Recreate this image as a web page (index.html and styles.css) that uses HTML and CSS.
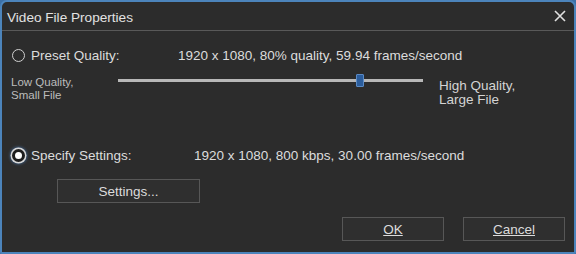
FILE: index.html
```html
<!doctype html>
<html lang="en">
  <head>
    <meta charset="UTF-8" />
    <title>Video File Properties</title>
    <link rel="stylesheet" href="styles.css">
  </head>
  <body>
    <div class="window">
      <div class="title-bar">
        <span class="title">Video File Properties</span>
        <svg class="close" width="12" height="12" viewBox="0 0 12 12">
          <path d="M1 1 L11 11 M11 1 L1 11" stroke="#e0e0e0" stroke-width="1.6" fill="none" />
        </svg>
      </div>

      <div class="content">
        <div class="option-row preset-row">
          <span class="radio"></span>
          <span class="option-label preset-label">Preset Quality:</span>
          <span class="option-value">1920 x 1080, 80% quality, 59.94 frames/second</span>
        </div>

        <div class="slider-row">
          <div class="slider-min">Low Quality,<br />Small File</div>
          <div class="slider-track">
            <span class="slider-thumb"></span>
          </div>
          <div class="slider-max">High Quality,<br />Large File</div>
        </div>

        <div class="option-row specify-row">
          <span class="radio checked"></span>
          <span class="option-label specify-label">Specify Settings:</span>
          <span class="option-value">1920 x 1080, 800 kbps, 30.00 frames/second</span>
        </div>

        <button class="btn settings-btn">Settings...</button>
      </div>

      <div class="footer">
        <button class="btn footer-btn"><u>OK</u></button>
        <button class="btn footer-btn"><u>Cancel</u></button>
      </div>
    </div>
  </body>
</html>
```

FILE: styles.css
```css
body {
  margin: 0;
  background: #3d70a6;
  font-family: "Liberation Sans", Arial, sans-serif;
  color: #dcdcdc;
}
.window {
  width: 576px;
  height: 254px;
  box-sizing: border-box;
  border: 2px solid #4c84bb;
  border-radius: 7px 7px 2px 2px;
  background: #2c2c2c;
  display: flex;
  flex-direction: column;
}
.title-bar {
  height: 28px;
  display: flex;
  align-items: center;
  justify-content: space-between;
  padding: 0 8px 0 5px;
  border-bottom: 1px solid #595959;
}
.title {
  font-size: 13.6px;
  color: #e2e2e2;
  padding-top: 2px;
}
.close {
  display: block;
}
.content {
  flex: 1;
  padding: 0 10px;
}
.option-row {
  display: flex;
  align-items: center;
  height: 18px;
  font-size: 13.5px;
}
.preset-row {
  margin-top: 15px;
}
.specify-row {
  margin-top: 39px;
}
.radio {
  width: 13px;
  height: 13px;
  box-sizing: border-box;
  border: 1.5px solid #d0d0d0;
  border-radius: 50%;
  margin-right: 6px;
  flex-shrink: 0;
}
.radio.checked {
  background: #ffffff;
  border: 3px solid #1d1d1d;
  box-shadow: 0 0 0 1.5px #d8d8d8, 0 0 3px 2px rgba(80, 130, 190, 0.7);
}
.preset-label {
  width: 147px;
}
.specify-label {
  width: 163px;
}
.option-value {
  white-space: nowrap;
}
.slider-row {
  display: flex;
  align-items: flex-start;
  margin-top: 12px;
}
.slider-min {
  width: 107px;
  font-size: 11.5px;
  line-height: 13px;
  color: #bcbcbc;
  margin-left: -1px;
}
.slider-track {
  position: relative;
  width: 305px;
  height: 3px;
  margin-top: 3px;
  background: #b8b8b8;
}
.slider-thumb {
  position: absolute;
  left: 238px;
  top: -5px;
  width: 6px;
  height: 11px;
  background: #2b5d9c;
  border: 1px solid #5a8ac4;
  border-radius: 1px;
}
.slider-max {
  margin-left: 16px;
  margin-top: 3px;
  font-size: 13.5px;
  line-height: 14px;
  color: #d4d4d4;
}
.btn {
  background: #2f2f2f;
  border: 1px solid #575757;
  color: #dcdcdc;
  font-family: "Liberation Sans", Arial, sans-serif;
  font-size: 13.5px;
  padding: 0;
  height: 24px;
  box-sizing: border-box;
}
.settings-btn {
  display: block;
  width: 143px;
  margin: 15px 0 0 45px;
}
.footer {
  display: flex;
  justify-content: flex-end;
  gap: 19px;
  padding: 0 9px 11px 0;
}
.footer-btn {
  width: 102px;
}
```
